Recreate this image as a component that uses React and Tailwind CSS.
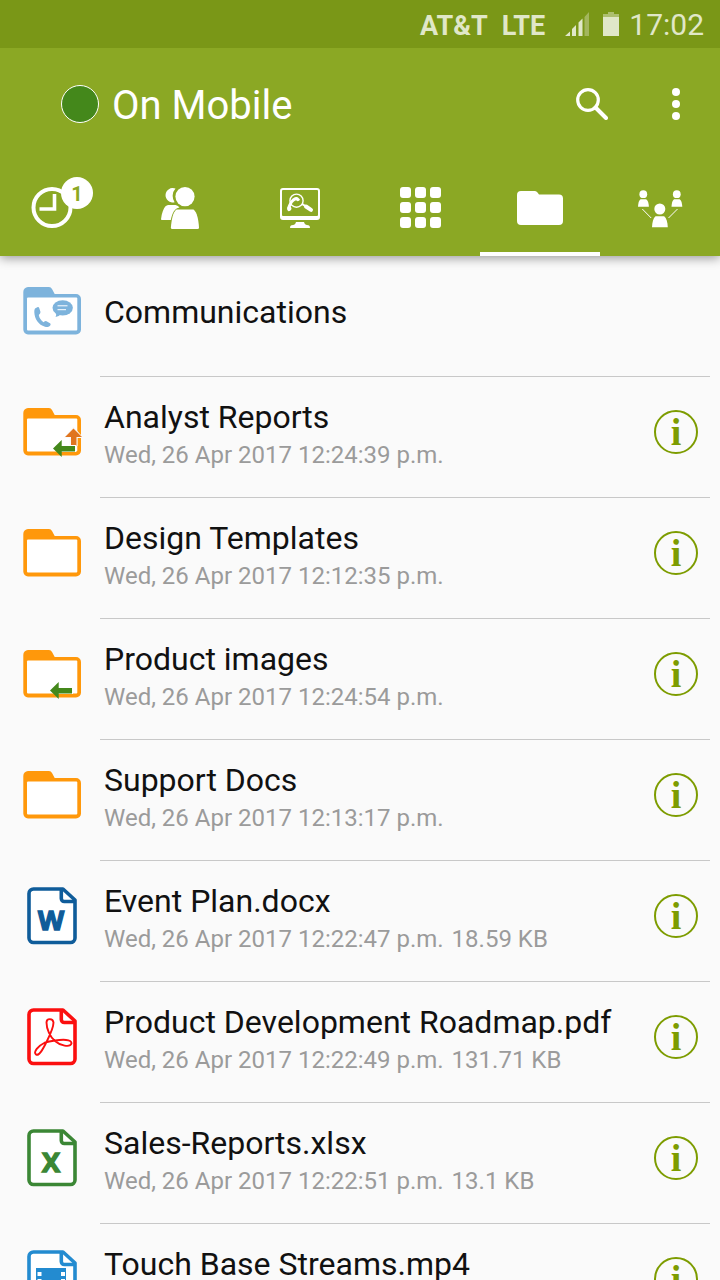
import { useState } from "react";

const tabs = [
	{ id: "recent", label: "Recent", Icon: ClockIcon, badge: 1 },
	{ id: "contacts", label: "Contacts", Icon: PeopleIcon },
	{ id: "support", label: "Remote support", Icon: MonitorIcon },
	{ id: "apps", label: "Apps", Icon: GridIcon },
	{ id: "files", label: "Files", Icon: FolderTabIcon },
	{ id: "network", label: "Network", Icon: NetworkIcon },
];

const items = [
	{ name: "Communications", Icon: CommunicationsIcon },
	{
		name: "Analyst Reports",
		date: "Wed, 26 Apr 2017 12:24:39 p.m.",
		Icon: SyncFolderIcon,
	},
	{
		name: "Design Templates",
		date: "Wed, 26 Apr 2017 12:12:35 p.m.",
		Icon: FolderIcon,
	},
	{
		name: "Product images",
		date: "Wed, 26 Apr 2017 12:24:54 p.m.",
		Icon: InboundFolderIcon,
	},
	{
		name: "Support Docs",
		date: "Wed, 26 Apr 2017 12:13:17 p.m.",
		Icon: FolderIcon,
	},
	{
		name: "Event Plan.docx",
		date: "Wed, 26 Apr 2017 12:22:47 p.m.",
		size: "18.59 KB",
		Icon: WordIcon,
	},
	{
		name: "Product Development Roadmap.pdf",
		date: "Wed, 26 Apr 2017 12:22:49 p.m.",
		size: "131.71 KB",
		Icon: PdfIcon,
	},
	{
		name: "Sales-Reports.xlsx",
		date: "Wed, 26 Apr 2017 12:22:51 p.m.",
		size: "13.1 KB",
		Icon: ExcelIcon,
	},
	{
		name: "Touch Base Streams.mp4",
		date: "Wed, 26 Apr 2017 12:22:53 p.m.",
		size: "4.2 MB",
		Icon: VideoIcon,
	},
];

/* ---- tab icons ---- */

function ClockIcon() {
	return (
		<svg width="42" height="42" viewBox="0 0 42 42" fill="none" stroke="#fff">
			<circle cx="21" cy="20.5" r="18.5" strokeWidth="4" />
			<path d="M23.5 7V22H8.5" strokeWidth="3.6" />
		</svg>
	);
}

function PeopleIcon() {
	return (
		<svg width="38" height="42" viewBox="0 0 38 42" fill="#fff">
			<path d="M14.5 1.6A7.2 7.2 0 1 0 13.6 15.2A11 11 0 0 1 14.5 1.6Z" />
			<path d="M0 32.2C.8 26 2.5 21.5 4.5 19.3C5.6 18.2 7 18 8.5 18H14.5C16.5 18.5 17.5 19.5 18.5 20.5C13.5 21.5 11.5 25.5 9.8 33H.9Q0 33 0 32.2Z" />
			<circle cx="24" cy="9.6" r="9.6" />
			<path d="M15.5 22.6H32.5C36 25 37.5 33 38 40.5Q38 42 36.6 42H11.2Q9.8 42 9.9 40.5C10.5 33 12 25 15.5 22.6Z" />
		</svg>
	);
}

function MonitorIcon() {
	return (
		<svg width="40" height="40" viewBox="0 0 40 40" fill="none">
			<path
				fill="#fff"
				fillRule="evenodd"
				d="M3 0H37A3 3 0 0 1 40 3V29A3 3 0 0 1 37 32H3A3 3 0 0 1 0 29V3A3 3 0 0 1 3 0ZM3 2Q2 2 2 3V27Q2 28 3 28H37Q38 28 38 27V3Q38 2 37 2Z"
			/>
			<path fill="#fff" d="M16 34H24C24.5 36.5 26 37 28.5 37.3Q30 37.6 30 40H10Q10 37.6 11.5 37.3C14 37 15.5 36.5 16 34Z" />
			<circle cx="16.5" cy="12.7" r="6.6" stroke="#fff" strokeWidth="1.4" />
			<path d="M22 16L25.5 18.2" stroke="#fff" strokeWidth="2" />
			<path d="M26 18.5L31 21.8" stroke="#fff" strokeWidth="4" strokeLinecap="round" />
			<path
				fill="#fff"
				d="M13.5 10C15 8.8 16.5 9 18 9.4L20 11.5Q19.5 13.3 17.5 13.3L16 12.3C13.5 13.5 11.5 15.5 10.8 18.5L11.5 20.5Q11 23.3 8.5 23.3Q6.8 22.5 7 20C7.6 19 8 17 9.5 14.5C10.5 12.5 12 11 13.5 10Z"
			/>
		</svg>
	);
}

function GridIcon() {
	return (
		<svg width="41" height="42" viewBox="0 0 41 42" fill="#fff">
			{[0, 15, 30].map((y) =>
				[0, 15, 30].map((x) => (
					<rect key={`${x}-${y}`} x={x} y={y} width="11" height="11" rx="3" />
				))
			)}
		</svg>
	);
}

function FolderTabIcon() {
	return (
		<svg width="46" height="34" viewBox="0 0 46 34" fill="#fff">
			<path d="M4 0H18Q19.5 0 20.5 1.5L22 3.5H42A4 4 0 0 1 46 7.5V30A4 4 0 0 1 42 34H4A4 4 0 0 1 0 30V4A4 4 0 0 1 4 0Z" />
		</svg>
	);
}

function NetworkIcon() {
	return (
		<svg width="44" height="38" viewBox="0 0 44 38" fill="#fff" className="overflow-visible">
			<circle cx="5.3" cy="5.2" r="3.9" />
			<path d="M2.5 10.2H8.2C10 11.5 10.7 14 10.9 17.8H0C.2 14 .8 11.5 2.5 10.2Z" />
			<circle cx="38.8" cy="5.2" r="3.9" />
			<path d="M36 10.2H41.7C43.5 11.5 44 14 44.3 17.8H33.5C33.7 14 34.3 11.5 36 10.2Z" />
			<circle cx="21.8" cy="20" r="5.5" />
			<path d="M17.5 27.2H26.2C28.5 29 29.5 33 29.8 38.2H14C14.3 33 15.2 29 17.5 27.2Z" />
			<path d="M4.3 20L13.2 29M39.5 20L30.5 29" stroke="#fff" strokeWidth="1" />
		</svg>
	);
}

/* ---- list icons ---- */

function Folder({ color, children }) {
	return (
		<svg
			width="58"
			height="50"
			viewBox="0 0 58 50"
			className="overflow-visible"
			aria-hidden="true"
		>
			<path
				fill={color}
				d="M5 0H26Q28 0 29 2L31.7 7H53A5 5 0 0 1 58 12V42.5A5 5 0 0 1 53 47.5H5A5 5 0 0 1 .3 42.5V5A5 5 0 0 1 5 0Z"
			/>
			<rect x="4" y="10.5" width="50.3" height="33" rx="1" fill="#fff" />
			{children}
		</svg>
	);
}

function FolderIcon() {
	return <Folder color="#ff980b" />;
}

function CommunicationsIcon() {
	return (
		<Folder color="#7db3dc">
			<path
				fill="#7db3dc"
				d="M12 21.5L14.8 20Q15.8 19.8 16.2 21L17.5 25Q17.5 26.5 15.8 28C16.3 31 18 33.5 20.5 35.2Q22.3 33.8 23.5 34.2L27 36.2Q28 37 27.5 38C26.5 39.8 24.5 40.5 22 39.8C15.5 37.8 11.5 32 11.3 25Q11.2 22.5 12 21.5Z"
			/>
			<ellipse cx="39.7" cy="20.8" rx="10.2" ry="7.6" fill="#7db3dc" />
			<path d="M32 24Q34 27.5 32.5 30Q37 28.8 38.5 26.5Z" fill="#7db3dc" />
			<path d="M34.5 18.8H44.5M34.5 22.7H43" stroke="#fff" strokeWidth="1" />
		</Folder>
	);
}

function LeftArrow() {
	return <path fill="#44881b" d="M0 8.5L8.7 0V6H22V11.5H8.7V17Z" />;
}

function SyncFolderIcon() {
	return (
		<Folder color="#ff980b">
			<path fill="#fafafa" d="M50.5 18.5L60.5 30H54.5V38H46.5V30H40.5Z" />
			<path fill="#e0751f" d="M50.5 20.5L59 29H53.5V37.5H48V29H42Z" />
			<path fill="#fff" d="M34 37H53V44H34Z" />
			<g transform="translate(30 32)">
				<LeftArrow />
			</g>
		</Folder>
	);
}

function InboundFolderIcon() {
	return (
		<Folder color="#ff980b">
			<path fill="#fff" d="M31 38H50V44H31Z" />
			<g transform="translate(27 32)">
				<LeftArrow />
			</g>
		</Folder>
	);
}

function FileShape({ color, children }) {
	return (
		<svg width="50" height="60" viewBox="0 0 50 60" aria-hidden="true">
			<path
				d="M36 2H6.5A4.5 4.5 0 0 0 2 6.5V51A4.5 4.5 0 0 0 6.5 55.5H43.5A4.5 4.5 0 0 0 48 51V13Z"
				fill="#fff"
				stroke={color}
				strokeWidth="3.6"
				strokeLinejoin="round"
			/>
			<path
				d="M34.3 2V11.5A3 3 0 0 0 37.3 14.5H48"
				fill="none"
				stroke={color}
				strokeWidth="3.6"
			/>
			{children}
		</svg>
	);
}

function FileLetter({ color, children }) {
	return (
		<text
			x="24"
			y="43"
			textAnchor="middle"
			fill={color}
			stroke={color}
			strokeWidth="1.4"
			className="font-['Open_Sans',sans-serif] text-[27px] font-bold"
		>
			{children}
		</text>
	);
}

function WordIcon() {
	return (
		<FileShape color="#0f5c9a">
			<FileLetter color="#0f5c9a">W</FileLetter>
		</FileShape>
	);
}

function ExcelIcon() {
	return (
		<FileShape color="#3b8735">
			<FileLetter color="#3b8735">X</FileLetter>
		</FileShape>
	);
}

function PdfIcon() {
	return (
		<FileShape color="#fb0f0f">
			<path
				d="M18 34.5C11 38 6 44 9 46.5C12 48.5 16 41 19.5 34C23 27 26.5 19 26.5 14.5C26 10 19.5 10 19.5 14.5C19.5 21 23 29 28 33C33 37.5 43 40 44.5 35.5C45 31 35 31.5 28 32.5C24 33 21 33.5 18 34.5Z"
				fill="none"
				stroke="#fb0f0f"
				strokeWidth="1.9"
			/>
		</FileShape>
	);
}

function VideoIcon() {
	return (
		<FileShape color="#238bd0">
			<rect x="9" y="18" width="30" height="28" fill="#238bd0" />
			{[22, 29, 36].map((y) => (
				<g key={y} fill="#fff">
					<rect x="10.5" y={y} width="4" height="4" />
					<rect x="34" y={y} width="4" height="4" />
				</g>
			))}
		</FileShape>
	);
}

/* ---- page parts ---- */

function StatusBar() {
	return (
		<div className="relative z-20 flex h-12 shrink-0 items-center justify-end bg-[#7a9717] pr-4 text-[#e0e7c8]">
			<span className="mt-1 text-[27px] font-bold">AT&amp;T</span>
			<span className="mt-1 ml-3.5 text-[27px] font-bold">LTE</span>
			<svg className="ml-5" width="24" height="24" viewBox="0 0 24 24" fill="currentColor">
				<path d="M0 24L5 19.5V24ZM7 24V17L11 13V24ZM13.5 24V10.5L17.5 6.5V24Z" />
				<path d="M19.5 24V5L24 0V24Z" opacity=".4" />
			</svg>
			<svg className="ml-3.5" width="16" height="24" viewBox="0 0 16 24" fill="currentColor">
				<path d="M0 5H16V24H0Z" />
				<path d="M0 2H5V0H11V2H16V5H0Z" opacity=".5" />
			</svg>
			<span className="ml-2.5 text-[30px]">17:02</span>
		</div>
	);
}

function FileRow({ name, date, size, Icon }) {
	return (
		<li className="flex h-[121px]">
			<div className="flex w-25 shrink-0 items-center justify-center pb-2.5 pl-1">
				<Icon />
			</div>
			<div className="mr-2.5 flex min-w-0 flex-1 items-center border-b border-[#c8c8c8] pr-3 pb-2.5 pl-1">
				<div className="min-w-0 flex-1 pt-0.5">
					<p className="truncate text-[32px] leading-11 text-[#111]">{name}</p>
					{date && (
						<p className="truncate text-2xl leading-8 text-[#9b9b9b]">
							<span>{date}</span>
							{size && <span className="ml-2">{size}</span>}
						</p>
					)}
				</div>
				{date && (
					<button
						type="button"
						aria-label={`Details of ${name}`}
						className="flex size-11 shrink-0 items-center justify-center rounded-full border-2 border-[#7d9c00] font-['Liberation_Serif',serif] text-[38px] leading-none font-bold text-[#7d9c00]"
					>
						i
					</button>
				)}
			</div>
		</li>
	);
}

export default function App() {
	const [activeTab, setActiveTab] = useState("files");

	return (
		<div className="flex h-screen flex-col bg-[#fafafa] font-[Roboto,sans-serif]">
			<StatusBar />

			<header className="relative z-10 bg-[#8ba824] text-white shadow-[0_2px_10px_rgba(0,0,0,0.4)]">
				<div className="flex h-28 items-center pr-6 pl-[61px]">
					<span className="size-[38px] rounded-full border border-white bg-[#44881b]" />
					<h1 className="ml-3 flex-1 pt-1 pl-px text-[40px] leading-12">On Mobile</h1>
					<button type="button" aria-label="Search" className="p-3">
						<svg width="32" height="32" viewBox="0 0 32 32" fill="none" stroke="#fff">
							<circle cx="12" cy="12" r="10.3" strokeWidth="3.2" />
							<path d="M19.5 19.5L30 30" strokeWidth="4" strokeLinecap="round" />
						</svg>
					</button>
					<button type="button" aria-label="More options" className="ml-9 flex justify-center p-4">
						<svg width="8" height="32" viewBox="0 0 8 32" fill="#fff">
							<circle cx="4" cy="4" r="4" />
							<circle cx="4" cy="16" r="4" />
							<circle cx="4" cy="28" r="4" />
						</svg>
					</button>
				</div>

				<nav className="grid h-24 grid-cols-6">
					{tabs.map(({ id, label, Icon, badge }) => (
						<button
							key={id}
							type="button"
							aria-label={label}
							onClick={() => setActiveTab(id)}
							className={`flex items-center justify-center border-b-4 pt-1 ${
								activeTab === id ? "border-white" : "border-transparent"
							}`}
						>
							<span className={badge ? "relative mr-4" : "relative"}>
								<Icon />
								{badge && (
									<span className="absolute -top-2.5 -right-5 flex size-8 items-center justify-center rounded-full bg-white pt-0.5 text-xl font-bold text-[#8ba824]">
										{badge}
									</span>
								)}
							</span>
						</button>
					))}
				</nav>
			</header>

			<ul className="min-h-0 flex-1 overflow-y-auto [scrollbar-width:none]">
				{items.map((item) => (
					<FileRow key={item.name} {...item} />
				))}
			</ul>
		</div>
	);
}
